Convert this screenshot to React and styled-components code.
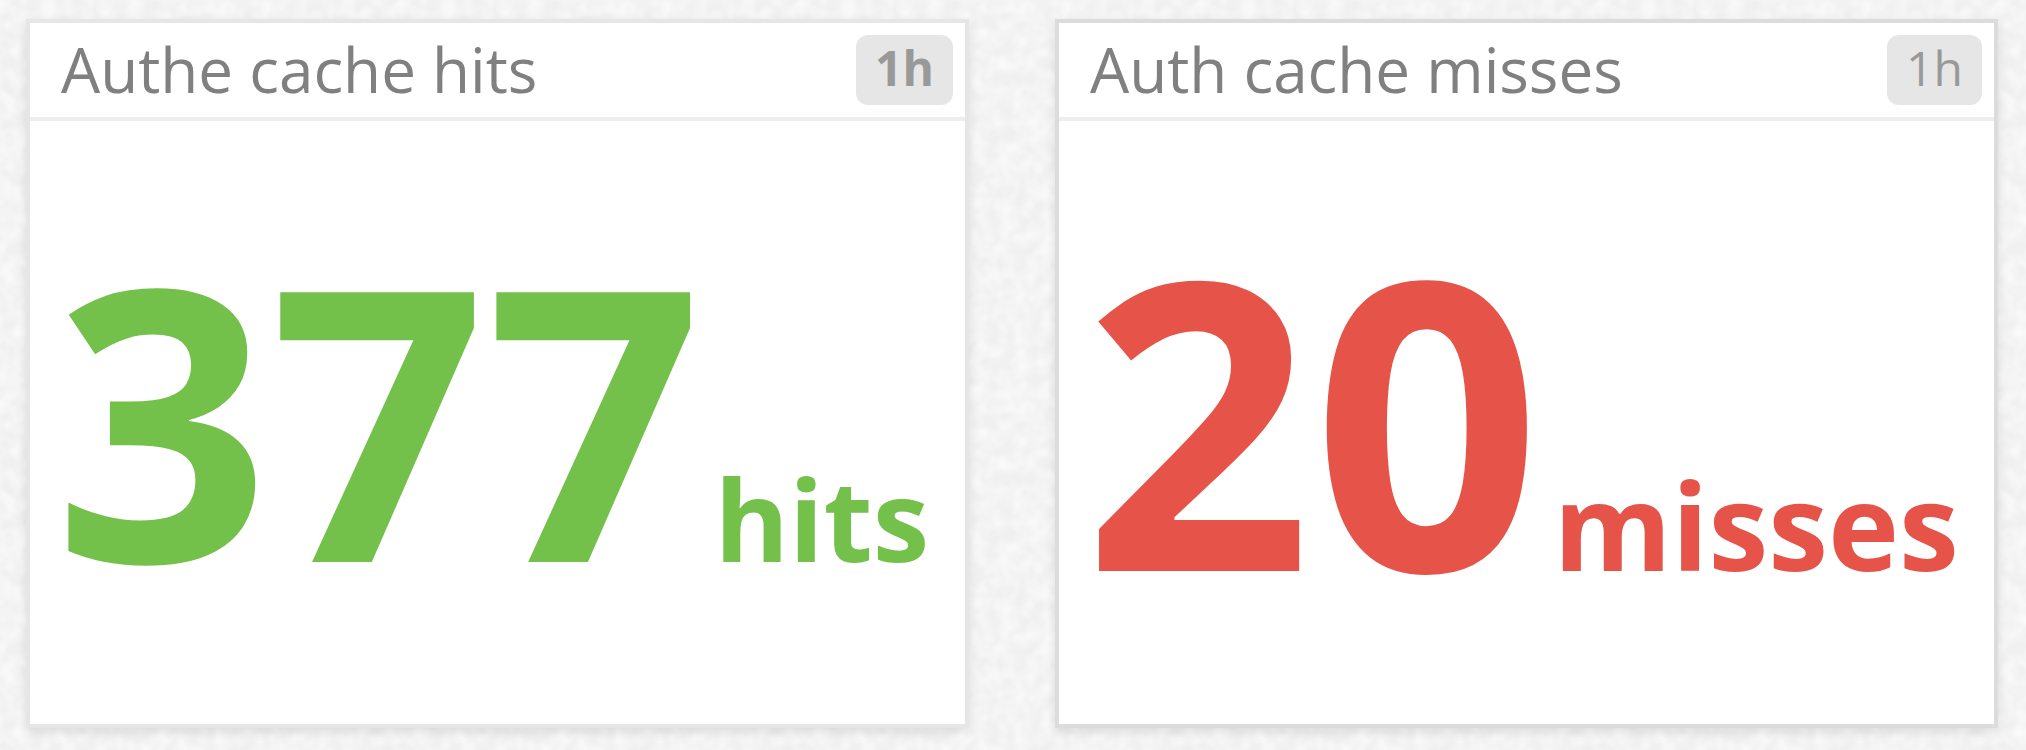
import React from "react";
import styled, { createGlobalStyle } from "styled-components";

const grain = encodeURIComponent(
  `<svg xmlns="http://www.w3.org/2000/svg" width="400" height="400">
    <filter id="n" x="0" y="0" width="100%" height="100%" color-interpolation-filters="sRGB">
      <feTurbulence type="fractalNoise" baseFrequency="0.07" numOctaves="2" seed="4" stitchTiles="stitch"/>
      <feColorMatrix values="0 0 0 0 1  0 0 0 0 1  0 0 0 0 1  1.2 0 0 0 -0.35"/>
    </filter>
    <rect width="400" height="400" filter="url(#n)"/>
  </svg>`
);

const GlobalStyle = createGlobalStyle`
  * {
    box-sizing: border-box;
  }
  body {
    margin: 0;
    font-family: "Open Sans", "Noto Sans", sans-serif;
    background: #f0f0f0 url("data:image/svg+xml,${grain}");
  }
`;

const Dashboard = styled.main`
  min-height: 100vh;
  padding: 19px 28px 22px 26px;
  display: grid;
  grid-template-columns: 1fr 1fr;
  gap: 86px;
`;

const Card = styled.section`
  display: flex;
  flex-direction: column;
  background: #fff;
  border: 4px solid ${(props) => props.$border};
  box-shadow: 0 4px 10px rgba(0, 0, 0, 0.1);
`;

const CardHeader = styled.header`
  display: flex;
  justify-content: space-between;
  align-items: center;
  padding: 12px 12px 12px 31px;
  border-bottom: 4px solid #eee;
`;

const Title = styled.h2`
  margin: 0;
  padding-bottom: 2px;
  font-size: 62px;
  line-height: 68px;
  font-weight: 400;
  color: #808080;
  white-space: nowrap;
`;

const Timeframe = styled.span`
  padding: 0 19px 4px;
  border-radius: 12px;
  background: #e6e6e6;
  color: #999;
  font-size: 48px;
  line-height: 66px;
  font-weight: ${(props) => (props.$bold ? 700 : 400)};
`;

const CardBody = styled.div`
  flex: 1;
  display: flex;
  align-items: center;
  padding: 0 24px 14px;
`;

const Value = styled.p`
  display: flex;
  align-items: baseline;
  gap: 12px;
  margin: 0;
  font-size: ${(props) => props.$size}px;
  line-height: 1;
  font-weight: 700;
  color: ${(props) => props.$color};
`;

const Unit = styled.span`
  font-size: 0.3em;
`;

const metrics = [
  {
    title: "Authe cache hits",
    value: 377,
    unit: "hits",
    color: "#73c04b",
    border: "#e6e6e6",
    size: 378,
    boldTimeframe: true,
  },
  {
    title: "Auth cache misses",
    value: 20,
    unit: "misses",
    color: "#e65348",
    border: "#dcdcdc",
    size: 401,
    boldTimeframe: false,
  },
];

const QueryValue = ({ metric }) => {
  return (
    <Card $border={metric.border}>
      <CardHeader>
        <Title>{metric.title}</Title>
        <Timeframe $bold={metric.boldTimeframe}>1h</Timeframe>
      </CardHeader>
      <CardBody>
        <Value $color={metric.color} $size={metric.size}>
          <span>{metric.value}</span>
          <Unit>{metric.unit}</Unit>
        </Value>
      </CardBody>
    </Card>
  );
};

const App = () => {
  return (
    <>
      <GlobalStyle />
      <Dashboard>
        {metrics.map((metric) => (
          <QueryValue key={metric.title} metric={metric} />
        ))}
      </Dashboard>
    </>
  );
};

export default App;
